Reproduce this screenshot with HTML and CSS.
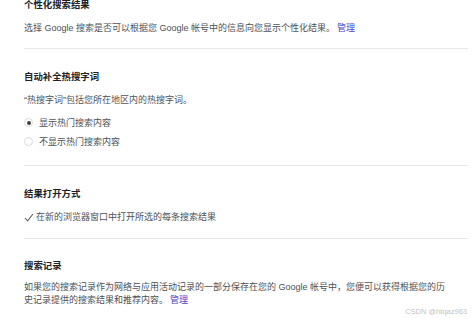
FILE: index.html
```html
<!DOCTYPE html>
<html lang="zh-CN">
<head>
    <meta charset="UTF-8">
    <meta name="viewport" content="width=device-width, initial-scale=1.0">
    <title>搜索设置</title>
    <link rel="stylesheet" href="styles.css">
</head>
<body>
    <div class="settings">
        <div class="section first">
            <h2 class="section-title">个性化搜索结果</h2>
            <p class="section-text">选择 Google 搜索是否可以根据您 Google 帐号中的信息向您显示个性化结果。<a href="#" class="link">管理</a></p>
        </div>

        <div class="section">
            <h2 class="section-title">自动补全热搜字词</h2>
            <p class="section-text">“热搜字词”包括您所在地区内的热搜字词。</p>
            <div class="options">
                <label class="option">
                    <span class="radio checked"></span>
                    显示热门搜索内容
                </label>
                <label class="option">
                    <span class="radio"></span>
                    不显示热门搜索内容
                </label>
            </div>
        </div>

        <div class="section">
            <h2 class="section-title">结果打开方式</h2>
            <label class="check-row">
                <svg class="check" width="10" height="9" viewBox="0 0 10 9">
                    <path d="M1 5 L3.6 7.8 L9 1" fill="none" stroke="#5f6368" stroke-width="1.1"/>
                </svg>
                在新的浏览器窗口中打开所选的每条搜索结果
            </label>
        </div>

        <div class="section last">
            <h2 class="section-title">搜索记录</h2>
            <p class="section-text narrow">如果您的搜索记录作为网络与应用活动记录的一部分保存在您的 Google 帐号中，您便可以获得根据您的历史记录提供的搜索结果和推荐内容。<a href="#" class="link">管理</a></p>
        </div>
    </div>

    <div class="watermark">CSDN @htqaz963</div>
</body>
</html>
```

FILE: styles.css
```css
body {
    margin: 0;
    background-color: #ffffff;
    font-family: "Liberation Sans", "Noto Sans CJK SC", sans-serif;
    color: #4d5156;
    overflow: hidden;
}

.settings {
    margin: 0 6px 0 24px;
}

.section {
    padding: 21px 0 14px;
    border-bottom: 1px solid #e8e8e8;
}

.section.first {
    margin-top: -2px;
    padding-top: 0;
    padding-bottom: 13px;
}

.section.last {
    padding-top: 20px;
    border-bottom: none;
}

.section-title {
    margin: 0 0 10px;
    font-size: 9.4px;
    line-height: 14px;
    font-weight: bold;
    color: #202124;
}

.section.last .section-title {
    margin-bottom: 8px;
}

.section-text {
    margin: 0;
    font-size: 9px;
    line-height: 13px;
}

.section-text.narrow {
    max-width: 428px;
}

.link {
    margin-left: 2px;
    color: #4a3fcf;
    text-decoration: none;
}

.options {
    margin-top: 6px;
}

.option {
    display: flex;
    align-items: center;
    gap: 6px;
    height: 19px;
    font-size: 9px;
}

.radio {
    box-sizing: border-box;
    width: 9px;
    height: 9px;
    border: 1px solid #dadce0;
    border-radius: 50%;
    display: flex;
    align-items: center;
    justify-content: center;
}

.radio.checked::after {
    content: "";
    width: 4px;
    height: 4px;
    border-radius: 50%;
    background-color: #3c4043;
}

.check-row {
    display: flex;
    align-items: center;
    gap: 2px;
    margin-top: 1px;
    font-size: 9px;
    line-height: 13px;
}

.check {
    display: block;
}

.watermark {
    position: absolute;
    right: 7px;
    bottom: 3px;
    font-size: 7.5px;
    line-height: 9px;
    color: #c4c4c4;
}
```
